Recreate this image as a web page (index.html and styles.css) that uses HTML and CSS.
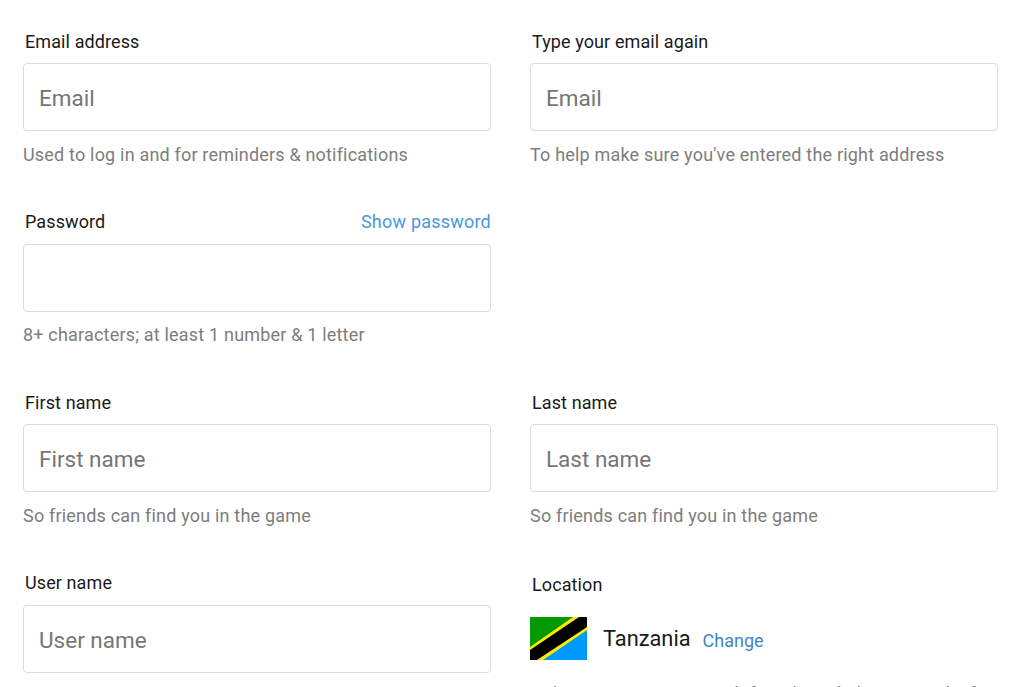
FILE: index.html
```html
<!DOCTYPE html>
<html lang="en">
<head>
<meta charset="utf-8">
<title>Sign up</title>
<link rel="stylesheet" href="styles.css">
</head>
<body>
<form class="form">
  <div class="field">
    <div class="label-row"><label class="label">Email address</label></div>
    <input class="input" type="text" placeholder="Email">
    <p class="help">Used to log in and for reminders &amp; notifications</p>
  </div>
  <div class="field">
    <div class="label-row"><label class="label">Type your email again</label></div>
    <input class="input" type="text" placeholder="Email">
    <p class="help">To help make sure you've entered the right address</p>
  </div>
  <div class="field">
    <div class="label-row"><label class="label">Password</label><a class="show">Show password</a></div>
    <input class="input" type="password">
    <p class="help">8+ characters; at least 1 number &amp; 1 letter</p>
  </div>
  <div class="field"></div>
  <div class="field">
    <div class="label-row"><label class="label">First name</label></div>
    <input class="input" type="text" placeholder="First name">
    <p class="help">So friends can find you in the game</p>
  </div>
  <div class="field">
    <div class="label-row"><label class="label">Last name</label></div>
    <input class="input" type="text" placeholder="Last name">
    <p class="help">So friends can find you in the game</p>
  </div>
  <div class="field">
    <div class="label-row"><label class="label">User name</label></div>
    <input class="input" type="text" placeholder="User name">
  </div>
  <div class="field location">
    <div class="label-row"><label class="label">Location</label></div>
    <div class="place">
      <svg class="flag" viewBox="0 0 57 43" aria-hidden="true">
        <rect width="57" height="43" fill="#009a00"/>
        <polygon points="0,43 57,0 57,43" fill="#0099ff"/>
        <polygon points="0,30 43,0 57,0 57,13 13,43 0,43" fill="#ffee00"/>
        <polygon points="0,33 49,0 57,0 57,10 7,43 0,43" fill="#000"/>
      </svg>
      <span class="country">Tanzania</span>
      <a class="change">Change</a>
    </div>
    <p class="help">Helps us connect you with friends and players nearby for</p>
  </div>
</form>
</body>
</html>
```
FILE: styles.css
```css
* { box-sizing: border-box; }
html, body { margin: 0; height: 687px; overflow: hidden; background: #fff; }
body { font-family: Roboto, "Noto Sans", sans-serif; font-size: 18px; color: #1a1a1a; }
.form {
  display: grid;
  grid-template-columns: 468px 468px;
  column-gap: 39px;
  grid-auto-rows: 180.5px;
  padding: 28.2px 0 0 23px;
}
.label-row { display: flex; justify-content: space-between; align-items: center; height: 26px; padding-left: 2px; margin-bottom: 8.85px; }
.label { color: #1a1a1a; letter-spacing: 0.1px; }
.show { color: #4a98d8; letter-spacing: 0.22px; }
.input {
  display: block;
  width: 100%;
  height: 68px;
  padding: 2px 15px 0;
  border: 1px solid #dcdcdc;
  border-radius: 4px;
  font: inherit;
  font-size: 22.5px;
  color: #1a1a1a;
  background: #fff;
}
.input::placeholder { color: #767676; opacity: 1; }
.help { margin: 10.65px 0 0; color: #7d7d7d; line-height: 26px; letter-spacing: 0.19px; }
.place { display: flex; align-items: center; height: 43px; margin-top: 19.3px; }
.location .label-row { margin-top: 2px; margin-bottom: 0; }
.flag { width: 57px; height: 43px; flex: none; }
.country { margin-left: 16px; font-size: 21.8px; color: #1a1a1a; }
.change { margin-left: 12px; margin-top: 4px; color: #3f86c6; }
.location .help { margin-top: 21px; }
```
